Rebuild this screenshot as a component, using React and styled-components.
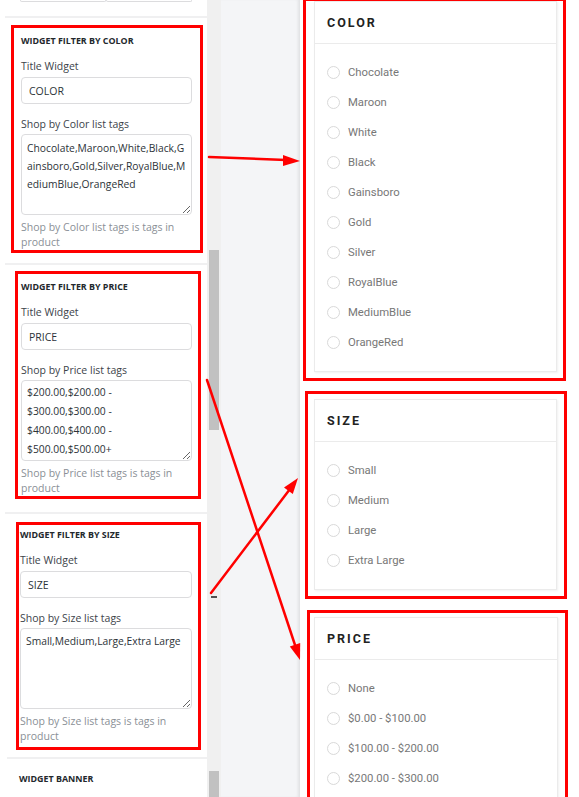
import styled, { createGlobalStyle } from "styled-components";

const GlobalStyle = createGlobalStyle`
  html, body {
    margin: 0;
    padding: 0;
  }
  body {
    width: 579px;
    height: 797px;
    overflow: hidden;
    background: #fff;
    font-family: "Open Sans", "Liberation Sans", sans-serif;
  }
  * {
    box-sizing: border-box;
  }
`;

const Page = styled.div`
  position: relative;
  display: flex;
  width: 579px;
  height: 797px;
  overflow: hidden;
`;

// left: widget settings panel
const Sidebar = styled.div`
  width: 207px;
  flex-shrink: 0;
  display: flex;
  flex-direction: column;
  background: #fff;
`;

const StubRow = styled.div`
  display: flex;
  height: 2px;
  margin: 0 15px 0 20px;
`;

const Stub = styled.div`
  flex: 1;
  border: 1px solid #dcdcde;
  border-top: none;
  border-radius: 0 0 3px 3px;
`;

const Divider = styled.div`
  height: 2px;
  background: #f0f0f1;
  margin: ${(p) => p.$m};
`;

const Frame = styled.div`
  border: 3px solid #ff0000;
  margin: ${(p) => p.$m};
  padding: ${(p) => p.$p};
`;

const WidgetTitle = styled.div`
  font-size: 8.9px;
  line-height: 14px;
  font-weight: 700;
  color: #23282d;
  text-transform: uppercase;
  margin-top: ${(p) => p.$mt || 0}px;
  margin-left: ${(p) => p.$ml || 0}px;
`;

const FieldLabel = styled.div`
  font-size: 10.5px;
  line-height: 16px;
  color: #3c434a;
  margin-top: ${(p) => p.$mt}px;
`;

const TextInput = styled.input`
  display: block;
  width: 100%;
  height: 27px;
  margin-top: 3px;
  padding: 0 7px;
  border: 1px solid #dcdcde;
  border-radius: 4px;
  font-family: "Open Sans", "Liberation Sans", sans-serif;
  font-size: 10.5px;
  color: #2c3338;
  background: #fff;
  outline: none;
`;

const TagArea = styled.textarea`
  display: block;
  width: 100%;
  height: 81px;
  margin-top: 2px;
  padding: ${(p) => p.$pt}px 5px 0 5px;
  border: 1px solid #dcdcde;
  border-radius: 4px;
  font-family: "Open Sans", "Liberation Sans", sans-serif;
  font-size: 10.3px;
  line-height: ${(p) => p.$lh}px;
  color: #2c3338;
  background: #fff;
  word-break: ${(p) => (p.$breakAll ? "break-all" : "normal")};
  resize: vertical;
  overflow: hidden;
  outline: none;
`;

const Help = styled.div`
  margin-top: 5px;
  font-size: 10.5px;
  line-height: 15px;
  color: #8a8f96;
`;

const Widget = ({ frame, title, value, tagLabel, tags, lh, pt, breakAll }) => (
  <Frame $m={frame.m} $p={frame.p}>
    <WidgetTitle>{title}</WidgetTitle>
    <FieldLabel $mt={10}>Title Widget</FieldLabel>
    <TextInput readOnly value={value} />
    <FieldLabel $mt={12}>{tagLabel}</FieldLabel>
    <TagArea readOnly value={tags} $lh={lh} $pt={pt} $breakAll={breakAll} />
    <Help>{tagLabel} is tags in product</Help>
  </Frame>
);

// scrollbar of the settings panel
const Track = styled.div`
  width: 14px;
  flex-shrink: 0;
  display: flex;
  flex-direction: column;
  align-items: center;
  background: #f0f0f0;
`;

const Thumb = styled.div`
  width: 10px;
  flex: ${(p) => (p.$h ? "none" : "1")};
  height: ${(p) => (p.$h ? p.$h + "px" : "auto")};
  margin-top: ${(p) => p.$top}px;
  background: #c1c1c1;
`;

const TrackArrow = styled.div`
  width: 6px;
  height: 2px;
  margin-top: ${(p) => p.$top}px;
  background: #505050;
`;

// middle gray gap
const Canvas = styled.div`
  width: 79px;
  flex-shrink: 0;
  background: #f4f5f7;
  box-shadow: inset -3px 0 3px -1px rgba(0, 0, 0, 0.08);
`;

// right: filter widgets preview
const Preview = styled.div`
  flex: 1;
  display: flex;
  flex-direction: column;
  background: #fff;
`;

const Card = styled.div`
  background: #fff;
  border: 1px solid #ebebeb;
  box-shadow: 1px 1px 2px rgba(0, 0, 0, 0.06);
`;

const CardHeader = styled.div`
  height: 42px;
  display: flex;
  align-items: center;
  padding-left: 12px;
  border-bottom: 1px solid #ebebeb;
  font-family: Roboto, "Liberation Sans", sans-serif;
  font-size: 12.5px;
  font-weight: 700;
  letter-spacing: 2px;
  color: #222;
`;

const OptionList = styled.div`
  padding: 13px 0 14px 12px;
`;

const Option = styled.div`
  height: 30px;
  display: flex;
  align-items: center;
  gap: 8px;
  font-family: Roboto, "Liberation Sans", sans-serif;
  font-size: 11.3px;
  color: #777;
`;

const Radio = styled.span`
  width: 13px;
  height: 13px;
  border-radius: 50%;
  border: 1px solid #d9d9d9;
  flex-shrink: 0;
`;

const FilterCard = ({ frame, title, options }) => (
  <Frame $m={frame.m} $p={frame.p}>
    <Card>
      <CardHeader>{title}</CardHeader>
      <OptionList>
        {options.map((o) => (
          <Option key={o}>
            <Radio />
            {o}
          </Option>
        ))}
      </OptionList>
    </Card>
  </Frame>
);

const Overlay = styled.svg`
  position: absolute;
  left: 0;
  top: 0;
  pointer-events: none;
`;

const colors = [
  "Chocolate",
  "Maroon",
  "White",
  "Black",
  "Gainsboro",
  "Gold",
  "Silver",
  "RoyalBlue",
  "MediumBlue",
  "OrangeRed",
];
const sizes = ["Small", "Medium", "Large", "Extra Large"];
const prices = ["None", "$0.00 - $100.00", "$100.00 - $200.00", "$200.00 - $300.00"];

export default function App() {
  return (
    <Page>
      <GlobalStyle />
      <Sidebar>
        <StubRow>
          <Stub />
          <Stub />
        </StubRow>
        <Divider $m="14px 0 7px 5px" />
        <Widget
          frame={{ m: "0 4px 0 11px", p: "6px 8px 0 7px" }}
          title="Widget filter by color"
          value="COLOR"
          tagLabel="Shop by Color list tags"
          tags="Chocolate,Maroon,White,Black,Gainsboro,Gold,Silver,RoyalBlue,MediumBlue,OrangeRed"
          lh={18}
          pt={4}
          breakAll
        />
        <Divider $m="10px 0 6px 5px" />
        <Widget
          frame={{ m: "0 6px 0 15px", p: "6px 6px 0 3px" }}
          title="Widget filter by price"
          value="PRICE"
          tagLabel="Shop by Price list tags"
          tags="$200.00,$200.00 - $300.00,$300.00 - $400.00,$400.00 - $500.00,$500.00+"
          lh={19}
          pt={2}
        />
        <Divider $m="13px 0 8px 5px" />
        <Widget
          frame={{ m: "0 6px 0 16px", p: "3px 6px 3px 1px" }}
          title="Widget filter by size"
          value="SIZE"
          tagLabel="Shop by Size list tags"
          tags="Small,Medium,Large,Extra Large"
          lh={18}
          pt={3}
        />
        <Divider $m="7px 0 0 7px" />
        <WidgetTitle $mt={13} $ml={19}>
          Widget banner
        </WidgetTitle>
      </Sidebar>
      <Track>
        <Thumb $top={250} $h={180} />
        <TrackArrow $top={166} />
        <Thumb $top={173} />
      </Track>
      <Canvas />
      <Preview>
        <FilterCard
          frame={{ m: "-2px 13px 0 3px", p: "0 6px 6px 8px" }}
          title="COLOR"
          options={colors}
        />
        <FilterCard
          frame={{ m: "10px 12px 0 5px", p: "5px 7px 6px 6px" }}
          title="SIZE"
          options={sizes}
        />
        <FilterCard
          frame={{ m: "11px 11px 0 7px", p: "4px 7px 0 4px" }}
          title="PRICE"
          options={prices}
        />
      </Preview>
      <Overlay width="579" height="797" viewBox="0 0 579 797">
        <g stroke="#f00" strokeWidth="2.5" strokeLinecap="round">
          <line x1="209" y1="157" x2="286" y2="160" />
          <line x1="207" y1="380" x2="296" y2="648" />
          <line x1="211" y1="593" x2="290" y2="489" />
        </g>
        <g fill="#f00">
          <polygon points="300,161 283,155 283,166" />
          <polygon points="300,660 289.8,646.5 300.2,643.1" />
          <polygon points="298,478 292.8,494.1 284,487.5" />
        </g>
      </Overlay>
    </Page>
  );
}
